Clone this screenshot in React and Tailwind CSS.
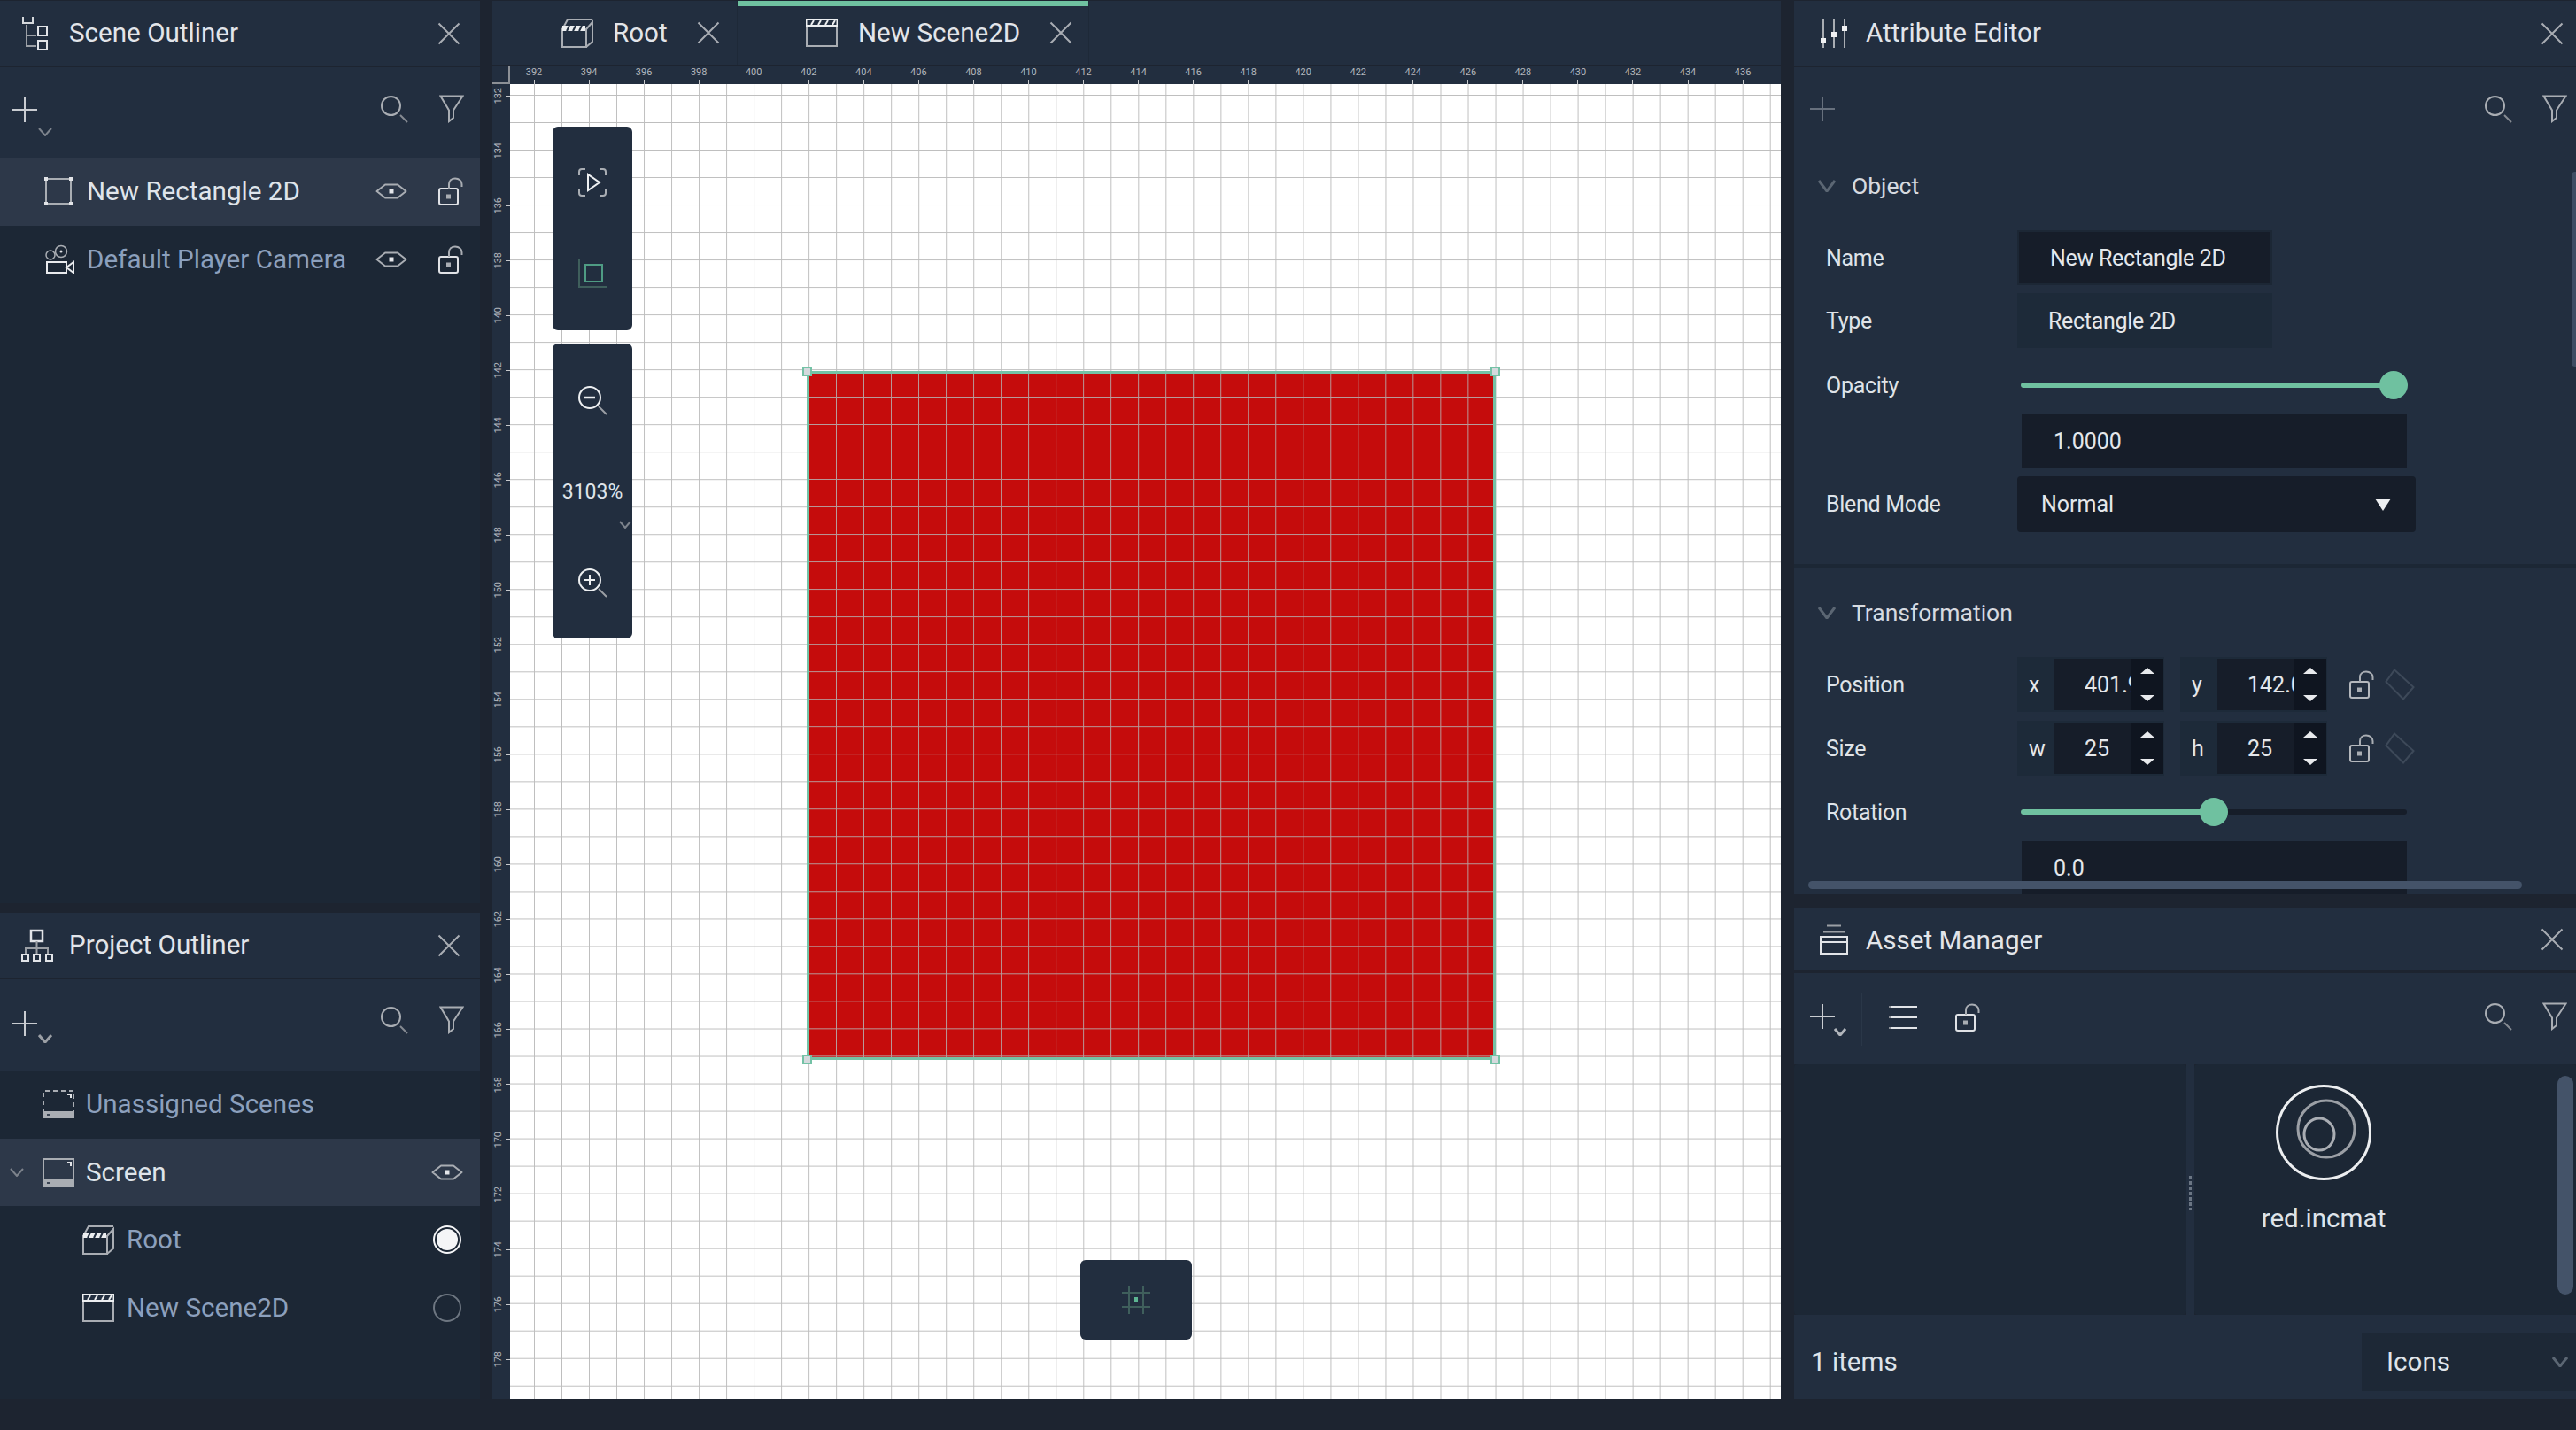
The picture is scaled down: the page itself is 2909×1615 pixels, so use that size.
import React from "react";

const X_LABELS = Array.from({ length: 23 }, (_, i) => 392 + i * 2);
const Y_LABELS = Array.from({ length: 24 }, (_, i) => 132 + i * 2);

const GRID =
  "bg-[linear-gradient(to_right,#bebebe_1px,transparent_1px),linear-gradient(to_bottom,#bebebe_1px,transparent_1px)] bg-[size:31.025px_31.025px] bg-[position:27px_12px]";
const RED_GRID =
  "bg-[linear-gradient(to_right,#b89c9c_1px,transparent_1px),linear-gradient(to_bottom,#b89c9c_1px,transparent_1px)] bg-[size:31.025px_31.025px] bg-[position:-1px_26px]";

function Svg({ w, h, children, className = "" }) {
  return (
    <svg width={w} height={h} viewBox={`0 0 ${w} ${h}`} fill="none" className={`shrink-0 ${className}`}>
      {children}
    </svg>
  );
}

function CloseIcon() {
  return (
    <Svg w={26} h={26}>
      <path d="M1.5 1.5L24.5 24.5M24.5 1.5L1.5 24.5" stroke="#a9adb3" strokeWidth="2" />
    </Svg>
  );
}

function SearchIcon() {
  return (
    <Svg w={32} h={32}>
      <circle cx="12.5" cy="12.5" r="10.5" stroke="#a9adb3" strokeWidth="2" />
      <path d="M23 23L31 31" stroke="#868b92" strokeWidth="2" />
    </Svg>
  );
}

function FilterIcon() {
  return (
    <Svg w={28} h={32}>
      <path d="M1.5 1.5H26.5L16 17.5V26L11 30V17.5Z" stroke="#a9adb3" strokeWidth="2" />
    </Svg>
  );
}

function PlusIcon({ dim = false, size = 28 }) {
  const c = dim ? "#67707d" : "#c9ccd1";
  return (
    <Svg w={size} h={size}>
      <path d={`M${size / 2} 0V${size}M0 ${size / 2}H${size}`} stroke={c} strokeWidth="2" />
    </Svg>
  );
}

function ChevronIcon({ color = "#7d838c", w = 16, h = 10, bold = false }) {
  return (
    <Svg w={w} h={h}>
      <path d={`M1 1L${w / 2} ${h - 1}L${w - 1} 1`} stroke={color} strokeWidth={bold ? 3 : 2} />
    </Svg>
  );
}

function EyeIcon() {
  return (
    <Svg w={36} h={20}>
      <path d="M1.5 10L11 2.5H25L34.5 10L25 17.5H11Z" stroke="#a9adb3" strokeWidth="2" strokeLinejoin="round" />
      <rect x="15.5" y="7.5" width="5" height="5" fill="#e4e6ea" />
    </Svg>
  );
}

function LockIcon({ dim = false }) {
  const c = dim ? "#b5b8bd" : "#e0e2e6";
  return (
    <Svg w={28} h={32}>
      <rect x="1" y="13" width="21" height="18" rx="2" stroke={c} strokeWidth="2" />
      <rect x="9" y="19.5" width="5" height="5" fill="#a9adb3" />
      <path d="M12 13V8C12 4 15 1.5 19 1.5C23 1.5 26.5 4 26.5 8V11" stroke="#a9adb3" strokeWidth="2" />
    </Svg>
  );
}

function DiamondIcon() {
  return (
    <Svg w={34} h={36}>
      <path d="M11 1.5L32.5 21L21 34.5L1.5 15Z" stroke="#3d4959" strokeWidth="2" />
    </Svg>
  );
}

function OutlinerIcon() {
  return (
    <Svg w={30} h={40}>
      <path d="M1 1V8H12V1" stroke="#d5d8dc" strokeWidth="2" />
      <path d="M5 10V34H16M5 22H16" stroke="#9b9fa5" strokeWidth="2" />
      <rect x="18" y="12" width="10" height="10" stroke="#e2e4e8" strokeWidth="2" />
      <rect x="18" y="28" width="10" height="10" stroke="#e2e4e8" strokeWidth="2" />
    </Svg>
  );
}

function ProjectIcon() {
  return (
    <Svg w={38} h={38}>
      <rect x="12" y="2" width="13" height="12" stroke="#e2e4e8" strokeWidth="2.5" />
      <path d="M18.5 14V22M6 30V22H31V30M18.5 22V30" stroke="#9b9fa5" strokeWidth="2" />
      <rect x="2" y="29" width="7" height="7" stroke="#e2e4e8" strokeWidth="2" />
      <rect x="15" y="29" width="7" height="7" stroke="#e2e4e8" strokeWidth="2" />
      <rect x="29" y="29" width="7" height="7" stroke="#e2e4e8" strokeWidth="2" />
    </Svg>
  );
}

function SlidersIcon() {
  return (
    <Svg w={32} h={32}>
      <path d="M4 0V32M16 0V32M28 0V32" stroke="#a9adb3" strokeWidth="2" />
      <rect x="1" y="21" width="6" height="6" fill="#f0f1f3" />
      <rect x="13" y="14" width="6" height="6" fill="#f0f1f3" />
      <rect x="25" y="7" width="6" height="6" fill="#f0f1f3" />
    </Svg>
  );
}

function AssetIcon() {
  return (
    <Svg w={32} h={34}>
      <path d="M8 1.5H24M4 8.5H28" stroke="#9b9fa5" strokeWidth="2" />
      <rect x="1" y="14" width="30" height="19" stroke="#e2e4e8" strokeWidth="2" />
      <path d="M1 20H31" stroke="#e2e4e8" strokeWidth="2" />
    </Svg>
  );
}

function RectIcon() {
  return (
    <Svg w={32} h={32}>
      <rect x="2" y="2" width="28" height="28" stroke="#a9adb3" strokeWidth="2" />
      <rect x="0" y="0" width="4" height="4" fill="#e2e4e8" />
      <rect x="28" y="0" width="4" height="4" fill="#e2e4e8" />
      <rect x="0" y="28" width="4" height="4" fill="#e2e4e8" />
      <rect x="28" y="28" width="4" height="4" fill="#e2e4e8" />
    </Svg>
  );
}

function CameraIcon() {
  return (
    <Svg w={34} h={34}>
      <circle cx="7" cy="12" r="5" stroke="#a9adb3" strokeWidth="1.5" />
      <circle cx="19" cy="8" r="6.5" stroke="#a9adb3" strokeWidth="1.5" />
      <circle cx="19" cy="8" r="1.5" fill="#e2e4e8" />
      <rect x="3" y="20" width="22" height="12" stroke="#e8eaed" strokeWidth="2" />
      <path d="M25 26L33 20V32Z" stroke="#e8eaed" strokeWidth="2" />
    </Svg>
  );
}

function ScreenIcon({ dashed = false }) {
  return (
    <Svg w={36} h={32}>
      <path
        d="M1 26V1H35V26"
        stroke="#a9adb3"
        strokeWidth="2"
        strokeDasharray={dashed ? "5 4" : undefined}
      />
      <rect x="0" y="24" width="36" height="8" fill="#a9adb3" />
      <rect x="5" y="27" width="4" height="2" fill="#3a4453" />
      <path d="M28 5H32V9" stroke="#e2e4e8" strokeWidth="2" />
    </Svg>
  );
}

function SceneBoxIcon() {
  return (
    <Svg w={36} h={33}>
      <path d="M1 12H28V32H1ZM28 32L35 26V4L28 12M1 12L7 1H35" stroke="#a9adb3" strokeWidth="2" />
      <rect x="1" y="8" width="26" height="6" fill="#eceef0" />
      <path d="M6 14L9 8M13 14L16 8M20 14L23 8" stroke="#222e3f" strokeWidth="2" />
    </Svg>
  );
}

function SceneFlatIcon() {
  return (
    <Svg w={36} h={32}>
      <rect x="1" y="8" width="34" height="23" stroke="#a9adb3" strokeWidth="2" />
      <rect x="0" y="0" width="36" height="9" fill="#eceef0" />
      <rect x="1.5" y="2" width="33" height="5" fill="#222e3f" />
      <path d="M6 7L9 2M14 7L17 2M22 7L25 2M30 7L33 2" stroke="#eceef0" strokeWidth="2" />
    </Svg>
  );
}

function PanelHeader({ icon, title, sizing = "h-[73px] pr-[22px]", iconBox = "w-[78px] pl-[25px]", textClass = "mt-[1px]" }) {
  return (
    <div className={`flex shrink-0 items-center bg-[#222e3f] ${sizing}`}>
      <div className={`flex shrink-0 items-center ${iconBox}`}>{icon}</div>
      <span className={`text-[29.6px] leading-none text-[#e2e5ea] ${textClass}`}>{title}</span>
      <div className="ml-auto">
        <CloseIcon />
      </div>
    </div>
  );
}

function OutlinerToolbar({ heightClass, plusClass, chevronClass, toolsClass, boldChevron = false }) {
  return (
    <div className={`mt-[2px] flex shrink-0 items-center bg-[#222e3f] pl-[14px] pr-[18px] ${heightClass}`}>
      <div className={plusClass}>
        <PlusIcon />
      </div>
      <div className={`ml-[1px] ${chevronClass}`}>
        <ChevronIcon bold={boldChevron} color={boldChevron ? "#9b9fa5" : "#7d838c"} />
      </div>
      <div className={`ml-auto flex items-center gap-[35px] ${toolsClass}`}>
        <SearchIcon />
        <FilterIcon />
      </div>
    </div>
  );
}

function TreeRow({ icon, label, selected, indent = 50, iconBox = "w-[48px]", right, chevron }) {
  return (
    <div className={`relative flex h-[76.5px] items-center pr-[19px] ${selected ? "bg-[#2d3849]" : ""}`}>
      {chevron && (
        <div className="absolute left-[11px] top-[33px]">
          <ChevronIcon />
        </div>
      )}
      <div className="flex w-full items-center" style={{ paddingLeft: indent }}>
        <div className={`flex shrink-0 items-center ${iconBox}`}>{icon}</div>
        <span className={`mt-[2px] text-[29.6px] leading-none ${selected ? "text-[#dfe4ea]" : "text-[#8ca0bd]"}`}>{label}</span>
        <div className="ml-auto flex items-center gap-[35px]">{right}</div>
      </div>
    </div>
  );
}

function LeftColumn() {
  return (
    <div className="flex w-[542px] shrink-0 flex-col">
      <div className="flex h-[1019px] shrink-0 flex-col">
        <PanelHeader icon={<OutlinerIcon />} title="Scene Outliner" />
        <OutlinerToolbar
          heightClass="h-[102px]"
          plusClass="-mt-[7px]"
          chevronClass="mt-[43px]"
          toolsClass="-mt-[9px]"
        />
        <div className="flex-1 bg-[#1c2735]">
          <TreeRow
            icon={<RectIcon />}
            label="New Rectangle 2D"
            selected
            right={
              <>
                <EyeIcon />
                <LockIcon />
              </>
            }
          />
          <TreeRow
            icon={<CameraIcon />}
            label="Default Player Camera"
            right={
              <>
                <EyeIcon />
                <LockIcon />
              </>
            }
          />
        </div>
      </div>
      <div className="mt-[11px] flex flex-1 flex-col">
        <PanelHeader icon={<ProjectIcon />} title="Project Outliner" iconBox="w-[78px] pl-[23px]" />
        <OutlinerToolbar
          heightClass="h-[103px]"
          plusClass="-mt-[4px]"
          chevronClass="mt-[30px]"
          toolsClass="-mt-[12px]"
          boldChevron
        />
        <div className="flex-1 bg-[#1c2735]">
          <TreeRow icon={<ScreenIcon dashed />} label="Unassigned Scenes" indent={48} iconBox="w-[49px]" />
          <TreeRow icon={<ScreenIcon />} label="Screen" indent={48} iconBox="w-[49px]" selected chevron right={<EyeIcon />} />
          <TreeRow
            icon={<SceneBoxIcon />}
            label="Root"
            indent={93}
            iconBox="w-[50px]"
            right={
              <div className="mr-[2px] flex h-[32px] w-[32px] items-center justify-center rounded-full border-2 border-[#f4f5f7]">
                <div className="h-[24px] w-[24px] rounded-full bg-[#f4f5f7]" />
              </div>
            }
          />
          <TreeRow
            icon={<SceneFlatIcon />}
            label="New Scene2D"
            indent={93}
            iconBox="w-[50px]"
            right={<div className="mr-[2px] h-[32px] w-[32px] rounded-full border-2 border-[#6d7681]" />}
          />
        </div>
      </div>
    </div>
  );
}

function TabBar() {
  return (
    <div className="flex h-[72px] shrink-0 bg-[#222e3f]">
      <div className="flex w-[277px] items-center border-r border-[#1e2938] pl-[78px]">
        <SceneBoxIcon />
        <span className="ml-[22px] mt-[2px] text-[29.6px] leading-none text-[#e2e5ea]">Root</span>
        <div className="ml-[33px]">
          <CloseIcon />
        </div>
      </div>
      <div className="relative flex w-[397px] items-center border-r border-[#1e2938] pl-[77px]">
        <div className="absolute left-0 right-0 top-0 h-[6px] bg-[#6fc1a0]" />
        <SceneFlatIcon />
        <span className="ml-[23px] mt-[2px] text-[29.6px] leading-none text-[#e2e5ea]">New Scene2D</span>
        <div className="ml-[33px]">
          <CloseIcon />
        </div>
      </div>
    </div>
  );
}

function TopRuler() {
  return (
    <div className="mt-[2px] flex h-[20px] shrink-0 bg-[#222e3f]">
      <div className="h-[20px] w-[20px] shrink-0 border-b-2 border-r-2 border-[#8c9096]" />
      <div className="flex flex-1 overflow-hidden">
        <div className="flex -ml-[4px]">
          {X_LABELS.map((n) => (
            <div key={n} className="flex h-[20px] w-[62.05px] shrink-0 flex-col items-center justify-between">
              <span className="text-[11px] leading-[14px] text-[#b2b6bc]">{n}</span>
              <div className="h-[5px] w-px bg-[#c8cacd]" />
            </div>
          ))}
        </div>
      </div>
    </div>
  );
}

function SideRuler() {
  return (
    <div className="h-full w-[20px] shrink-0 overflow-hidden bg-[#222e3f]">
      <div className="-mt-[18px] flex flex-col">
        {Y_LABELS.map((n) => (
          <div key={n} className="flex h-[62.05px] w-[20px] shrink-0 items-center justify-between">
            <span className="rotate-180 text-[11px] leading-[14px] text-[#b2b6bc] [writing-mode:vertical-rl]">{n}</span>
            <div className="h-px w-[5px] bg-[#c8cacd]" />
          </div>
        ))}
      </div>
    </div>
  );
}

function Handle({ className }) {
  return <div className={`absolute h-[11px] w-[11px] border-2 border-[#74c2a6] bg-[#d5d9dd] ${className}`} />;
}

function Canvas() {
  return (
    <div className={`relative flex-1 overflow-hidden bg-white ${GRID}`}>
      <div className={`absolute left-[335px] top-[324px] h-[778px] w-[778px] border-[3px] border-[#74c2a6] bg-[#c50c0c] ${RED_GRID}`}>
        <Handle className="-left-[8px] -top-[8px]" />
        <Handle className="-right-[8px] -top-[8px]" />
        <Handle className="-left-[8px] -bottom-[8px]" />
        <Handle className="-right-[8px] -bottom-[8px]" />
      </div>

      <div className="absolute left-[48px] top-[48px] flex h-[230px] w-[90px] flex-col items-center gap-[71px] rounded-md bg-[#222e3f] pt-[47px]">
        <Svg w={32} h={32}>
          <path d="M1 8V4Q1 1 4 1H8M24 1H28Q31 1 31 4V8M31 24V28Q31 31 28 31H24M8 31H4Q1 31 1 28V24" stroke="#a9adb3" strokeWidth="2" />
          <path d="M11 7V25L24 16Z" stroke="#eef0f2" strokeWidth="2" />
        </Svg>
        <Svg w={32} h={32}>
          <path d="M1 0V31H32" stroke="#3f5f5c" strokeWidth="2" />
          <rect x="8" y="6" width="19" height="19" stroke="#4f9c84" strokeWidth="2" />
        </Svg>
      </div>

      <div className="absolute left-[48px] top-[293px] flex h-[333px] w-[90px] flex-col items-center rounded-md bg-[#222e3f]">
        <Svg w={36} h={36} className="mt-[47px] ml-[2px]">
          <circle cx="14" cy="14" r="12" stroke="#eef0f2" strokeWidth="2" />
          <path d="M8 14H20" stroke="#eef0f2" strokeWidth="2.5" />
          <path d="M24 24L33 33" stroke="#9b9fa5" strokeWidth="2" />
        </Svg>
        <span className="mt-[71px] text-[23px] leading-[28px] text-[#dfe4ea]">3103%</span>
        <div className="absolute right-[1px] top-[200px]">
          <ChevronIcon w={14} h={9} />
        </div>
        <Svg w={36} h={36} className="mt-[71px] ml-[2px]">
          <circle cx="14" cy="14" r="12" stroke="#eef0f2" strokeWidth="2" />
          <path d="M8 14H20M14 8V20" stroke="#eef0f2" strokeWidth="2" />
          <path d="M24 24L33 33" stroke="#9b9fa5" strokeWidth="2" />
        </Svg>
      </div>

      <div className="absolute left-[644px] top-[1328px] flex h-[90px] w-[126px] items-center justify-center rounded-md bg-[#222e3f]">
        <Svg w={32} h={32}>
          <path d="M8 0V32M24 0V32M0 8H32M0 24H32" stroke="#3f5f5c" strokeWidth="2" />
          <rect x="14" y="13" width="4" height="6" fill="#5db592" />
        </Svg>
      </div>
    </div>
  );
}

function CenterColumn() {
  return (
    <div className="ml-[14px] flex w-[1455px] shrink-0 flex-col">
      <TabBar />
      <TopRuler />
      <div className="flex min-h-0 flex-1">
        <SideRuler />
        <Canvas />
      </div>
    </div>
  );
}

function SectionTitle({ children }) {
  return (
    <div className="flex h-[62px] items-center pl-[27px]">
      <div className="w-[38px]">
        <ChevronIcon color="#5b6673" w={20} h={14} bold />
      </div>
      <span className="text-[26.5px] leading-none text-[#d6dae0]">{children}</span>
    </div>
  );
}

function Label({ children }) {
  return <div className="w-[252px] shrink-0 pl-[36px] text-[25px] leading-none tracking-[-0.3px] text-[#dfe3e8]">{children}</div>;
}

function TextBox({ children, dark = true }) {
  return (
    <div
      className={`flex h-[62px] w-[288px] items-center pl-[35px] text-[25px] leading-none tracking-[-0.3px] text-[#e4e7eb] ${
        dark ? "border-2 border-[#1c2735] bg-[#161d29]" : "bg-[#1d2a39]"
      }`}
    >
      {children}
    </div>
  );
}

function Slider({ percent }) {
  return (
    <div className="relative ml-[4px] h-[6px] w-[436px] rounded-full bg-[#161d29]">
      <div className="h-full rounded-full bg-[#6fc1a0]" style={{ width: `${percent}%` }} />
      <div
        className="absolute top-[-13px] h-[32px] w-[32px] -translate-x-1/2 rounded-full bg-[#6fc1a0]"
        style={{ left: `${percent}%` }}
      />
    </div>
  );
}

function Spinner() {
  return (
    <div className="flex h-full w-[36px] shrink-0 flex-col items-center justify-between bg-[#0f1520] py-[10px]">
      <div className="h-0 w-0 border-x-[8px] border-b-[7px] border-x-transparent border-b-[#e8eaed]" />
      <div className="h-0 w-0 border-x-[8px] border-t-[7px] border-x-transparent border-t-[#e8eaed]" />
    </div>
  );
}

function NumberField({ axis, value }) {
  return (
    <div className="flex h-[62px] w-[166px] items-stretch bg-[#1d2a39] py-[2px] pr-[1px]">
      <span className="flex w-[42px] shrink-0 items-center pl-[13px] text-[25px] leading-none text-[#e4e7eb]">{axis}</span>
      <div className="flex w-[87px] shrink-0 items-center overflow-hidden bg-[#161d29] pl-[34px] text-[25px] leading-none text-[#e4e7eb]">
        <span className="whitespace-nowrap">{value}</span>
      </div>
      <Spinner />
    </div>
  );
}

function VectorRow({ label, a, b, className = "" }) {
  return (
    <div className={`flex items-center ${className}`}>
      <Label>{label}</Label>
      <NumberField axis={a[0]} value={a[1]} />
      <div className="w-[18px]" />
      <NumberField axis={b[0]} value={b[1]} />
      <div className="ml-[25px]">
        <LockIcon dim />
      </div>
      <div className="ml-[12px]">
        <DiamondIcon />
      </div>
    </div>
  );
}

function AttributeEditor() {
  return (
    <div className="flex h-[1009px] shrink-0 flex-col">
      <PanelHeader icon={<SlidersIcon />} title="Attribute Editor" iconBox="w-[81px] pl-[29px]" sizing="h-[73px] pr-[14px]" />
      <div className="relative mt-[2px] min-h-0 flex-1 overflow-hidden bg-[#222e3f]">
        <div className="flex h-[103px] items-center pl-[18px] pr-[10px]">
          <div className="-mt-[10px]">
            <PlusIcon dim />
          </div>
          <div className="ml-auto -mt-[10px] flex items-center gap-[34px]">
            <SearchIcon />
            <FilterIcon />
          </div>
        </div>

        <SectionTitle>Object</SectionTitle>
        <div className="mt-[19px] flex items-center">
          <Label>Name</Label>
          <TextBox>New Rectangle 2D</TextBox>
        </div>
        <div className="mt-[9px] flex items-center">
          <Label>Type</Label>
          <TextBox dark={false}>Rectangle 2D</TextBox>
        </div>
        <div className="mt-[11px] flex h-[62px] items-center">
          <Label>Opacity</Label>
          <Slider percent={96.5} />
        </div>
        <div className="mt-[2px] ml-[257px] flex h-[60px] w-[435px] items-center bg-[#161d29] pl-[36px] text-[25px] leading-none text-[#e4e7eb]">
          1.0000
        </div>
        <div className="mt-[10px] flex items-center">
          <Label>Blend Mode</Label>
          <div className="flex h-[63px] w-[450px] items-center justify-between rounded bg-[#161d29] pl-[27px] pr-[28px] text-[25px] leading-none text-[#e4e7eb]">
            Normal
            <div className="h-0 w-0 border-x-[9px] border-t-[14px] border-x-transparent border-t-[#eceef0]" />
          </div>
        </div>

        <div className="mt-[36px] h-[5px] bg-[#1c2735]" />
        <div className="mt-[19px]">
          <SectionTitle>Transformation</SectionTitle>
        </div>
        <VectorRow label="Position" a={["x", "401.9"]} b={["y", "142.0"]} className="mt-[19px]" />
        <VectorRow label="Size" a={["w", "25"]} b={["h", "25"]} className="mt-[10px]" />
        <div className="mt-[10px] flex h-[62px] items-center">
          <Label>Rotation</Label>
          <Slider percent={50} />
        </div>
        <div className="mt-[2px] ml-[257px] flex h-[60px] w-[435px] items-center bg-[#161d29] pl-[36px] text-[25px] leading-none text-[#e4e7eb]">
          0.0
        </div>

        <div className="absolute bottom-[6px] left-[16px] h-[9px] w-[806px] rounded-full bg-[#445369]" />
        <div className="absolute right-0 top-[118px] h-[220px] w-[5px] rounded-l bg-[#3f4d63]" />
      </div>
    </div>
  );
}

function AssetManager() {
  return (
    <div className="mt-[15px] flex min-h-0 flex-1 flex-col">
      <PanelHeader icon={<AssetIcon />} title="Asset Manager" iconBox="w-[81px] pl-[29px]" sizing="h-[71px] pr-[14px]" textClass="mt-[4px]" />
      <div className="mt-[3px] flex h-[103px] shrink-0 items-center bg-[#222e3f] pl-[18px] pr-[10px]">
        <div className="-mt-[6px]">
          <PlusIcon />
        </div>
        <div className="mt-[29px] -ml-[1px]">
          <ChevronIcon color="#b2b6bc" w={14} h={9} bold />
        </div>
        <div className="ml-[17px] h-[60px] w-px bg-[#2a3748]" />
        <div className="ml-[30px] -mt-[3px]">
          <Svg w={32} h={28}>
            <path d="M3 2H32M3 14H32M3 26H32" stroke="#e2e4e8" strokeWidth="2" />
            <path d="M0 2H2M0 14H2M0 26H2" stroke="#8c9096" strokeWidth="2" />
          </Svg>
        </div>
        <div className="ml-[43px] -mt-[3px]">
          <LockIcon />
        </div>
        <div className="ml-auto -mt-[5px] flex items-center gap-[34px]">
          <SearchIcon />
          <FilterIcon />
        </div>
      </div>
      <div className="flex h-[283px] shrink-0">
        <div className="w-[443px] rounded-sm bg-[#1c2735]" />
        <div className="flex w-[9px] shrink-0 justify-center bg-[#222e3f]">
          <div className="mt-[126px] h-[38px] w-[3px] bg-[repeating-linear-gradient(to_bottom,#6b7684_0_4px,transparent_4px_6px)]" />
        </div>
        <div className="relative flex flex-1 justify-center rounded-sm bg-[#1c2735]">
          <div className="flex w-[292px] flex-col items-center pt-[23px]">
            <Svg w={110} h={110}>
              <circle cx="55" cy="54" r="52.5" stroke="#eceef0" strokeWidth="3" />
              <ellipse cx="58" cy="50" rx="32" ry="32" stroke="#9b9fa5" strokeWidth="3" />
              <ellipse cx="50" cy="56" rx="17" ry="18" stroke="#a9adb3" strokeWidth="3" />
            </Svg>
            <span className="mt-[27px] text-[29.6px] leading-none text-[#dfe4ea]">red.incmat</span>
          </div>
          <div className="absolute right-[3px] top-[13px] h-[247px] w-[18px] rounded-full bg-[#445369]" />
          <div className="w-[139px]" />
        </div>
      </div>
      <div className="flex flex-1 items-center justify-between bg-[#222e3f] pl-[19px] pt-[11px]">
        <span className="mt-[2px] text-[29.6px] leading-none text-[#dfe4ea]">1 items</span>
        <div className="flex h-[66px] w-[242px] items-center justify-between bg-[#1d2836] pl-[28px] pr-[9px]">
          <span className="mt-[2px] text-[29.6px] leading-none text-[#dfe4ea]">Icons</span>
          <ChevronIcon color="#5b6673" w={18} h={12} bold />
        </div>
      </div>
    </div>
  );
}

function RightColumn() {
  return (
    <div className="ml-[15px] flex min-w-0 flex-1 flex-col">
      <AttributeEditor />
      <AssetManager />
    </div>
  );
}

export default function App() {
  return (
    <div className="flex h-[1615px] w-[2909px] flex-col overflow-hidden bg-[#1d2430] [font-family:Roboto,sans-serif]">
      <div className="flex h-[1580px] shrink-0 pt-[1px]">
        <LeftColumn />
        <CenterColumn />
        <RightColumn />
      </div>
    </div>
  );
}
